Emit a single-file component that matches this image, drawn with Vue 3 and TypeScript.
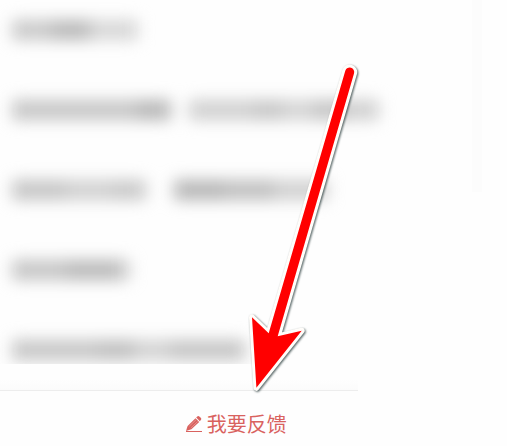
<script setup lang="ts">
interface Segment {
  width: number
  shade: number
  gap?: number
}

// Obscured question titles, each made of softly shaded runs.
const rows: Segment[][] = [
  [{ width: 40, shade: 200 }, { width: 38, shade: 184 }, { width: 48, shade: 214 }],
  [
    { width: 125, shade: 197 },
    { width: 34, shade: 182 },
    { width: 64, shade: 207, gap: 18 },
    { width: 30, shade: 198 },
    { width: 30, shade: 211 },
    { width: 36, shade: 196 },
    { width: 30, shade: 208 },
  ],
  [
    { width: 54, shade: 196 },
    { width: 46, shade: 207 },
    { width: 34, shade: 200 },
    { width: 50, shade: 181, gap: 28 },
    { width: 50, shade: 190 },
    { width: 54, shade: 207 },
  ],
  [{ width: 54, shade: 196 }, { width: 54, shade: 184 }, { width: 10, shade: 208 }],
  [
    { width: 86, shade: 197 },
    { width: 36, shade: 190 },
    { width: 36, shade: 209 },
    { width: 75, shade: 196 },
  ],
]
</script>

<template>
  <div class="page">
    <main class="panel">
      <ul class="list" aria-hidden="true">
        <li v-for="(row, i) in rows" :key="i" class="row">
          <span
            v-for="(seg, j) in row"
            :key="j"
            class="segment"
            :style="{
              width: seg.width + 'px',
              marginLeft: (seg.gap ?? 0) + 'px',
              backgroundColor: `rgb(${seg.shade}, ${seg.shade}, ${seg.shade})`,
            }"
          ></span>
        </li>
      </ul>
      <div class="divider"></div>
      <footer class="footer">
        <button type="button" class="feedback">
          <svg class="pencil" viewBox="0 0 18 18" aria-hidden="true">
            <path d="M1 16.5H17" stroke="currentColor" stroke-width="1" />
            <path d="M1 16 2.6 11 10.5 3.2 14.2 6.9 6.4 14.2Z" fill="currentColor" />
            <path d="M11.2 2.6 12.6 1.2Q13.3.6 14 1.2L16 3.1Q16.6 4 16 4.8L14.8 6.2Z" fill="currentColor" />
            <path d="M4.3 11.2 11 4.8M5.9 12.9 12.7 6.5" stroke="#eeb0ad" stroke-width=".6" />
          </svg>
          <span>我要反馈</span>
        </button>
      </footer>
    </main>
    <div class="edge"></div>
    <svg class="arrow" viewBox="240 58 120 340" aria-hidden="true">
      <path
        d="M345.3 70.7A4.5 4.5 0 0 1 354 73.5L277.7 336.3 301.7 330.7 256.4 387.7 252 317.3 268.7 333.3Z"
      />
    </svg>
  </div>
</template>

<style>
body {
  margin: 0;
  background: #fefefe;
}
</style>

<style scoped>
.page {
  position: relative;
  display: flex;
  align-items: flex-start;
  font-family: "Noto Sans CJK SC", sans-serif;
}

.panel {
  width: 93%;
}

.list {
  display: flex;
  flex-direction: column;
  gap: 60px;
  margin: 0;
  padding: 20px 0 4px 12px;
  overflow: hidden;
  list-style: none;
}

.row {
  display: flex;
  height: 20px;
  filter: blur(8px);
}

.segment {
  flex: none;
}

.divider {
  width: 76%;
  height: 27px;
  box-sizing: border-box;
  border-bottom: 1px solid #ededed;
  background: linear-gradient(#fefefe 60%, #fbfbfb);
}

.footer {
  display: flex;
  justify-content: center;
  padding: 18px 0;
}

.feedback {
  display: flex;
  align-items: center;
  gap: 4px;
  padding: 0;
  border: 0;
  background: none;
  color: #d9625f;
  font-family: inherit;
  font-size: 20px;
  font-weight: 400;
  line-height: 30px;
  cursor: pointer;
}

.pencil {
  width: 18px;
  height: 18px;
  fill: none;
}

.edge {
  width: 10px;
  height: 192px;
  background: #fcfcfc;
}

.arrow {
  position: absolute;
  top: 58px;
  left: 240px;
  width: 120px;
  height: 340px;
  overflow: visible;
}

.arrow path {
  fill: #ff0000;
  stroke: #fffdfa;
  stroke-width: 6px;
  stroke-linejoin: round;
  paint-order: stroke;
  filter: drop-shadow(1px 1px 1px rgba(20, 40, 40, 0.75));
}
</style>
